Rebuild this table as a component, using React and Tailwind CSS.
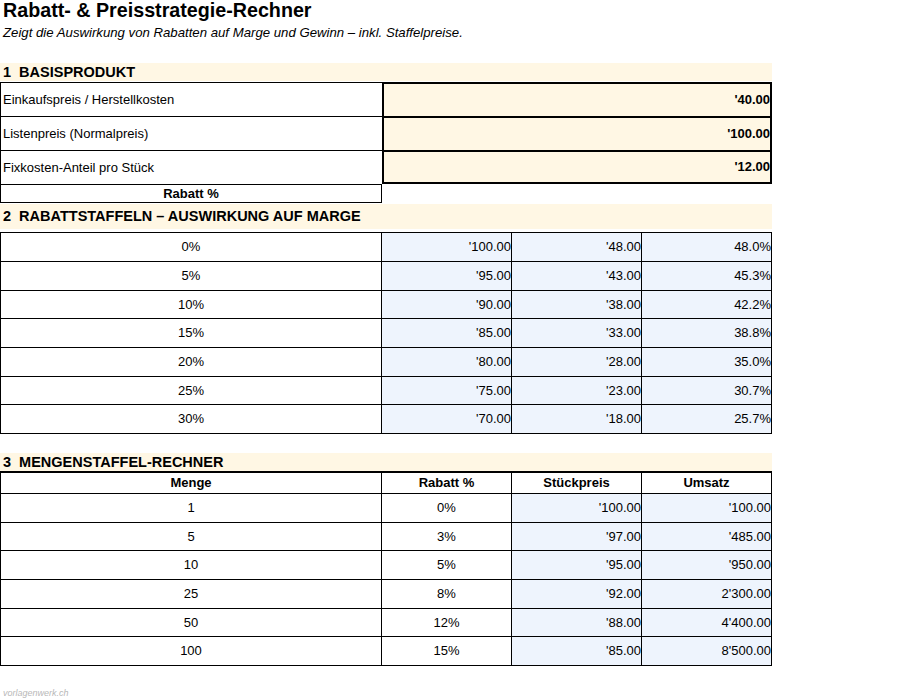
import React from "react";

const cream = "bg-[#fff7e4]";
const blue = "bg-[#eef4fd]";

const s2 = [
  ["0%", "'100.00", "'48.00", "48.0%"],
  ["5%", "'95.00", "'43.00", "45.3%"],
  ["10%", "'90.00", "'38.00", "42.2%"],
  ["15%", "'85.00", "'33.00", "38.8%"],
  ["20%", "'80.00", "'28.00", "35.0%"],
  ["25%", "'75.00", "'23.00", "30.7%"],
  ["30%", "'70.00", "'18.00", "25.7%"],
];
const s2h = ["h-[29px]", "h-[29px]", "h-[28px]", "h-[29px]", "h-[29px]", "h-[28px]", "h-[29px]"];

const s3 = [
  ["1", "0%", "'100.00", "'100.00"],
  ["5", "3%", "'97.00", "'485.00"],
  ["10", "5%", "'95.00", "'950.00"],
  ["25", "8%", "'92.00", "2'300.00"],
  ["50", "12%", "'88.00", "4'400.00"],
  ["100", "15%", "'85.00", "8'500.00"],
];
const s3h = ["h-[29px]", "h-[28px]", "h-[29px]", "h-[29px]", "h-[28px]", "h-[29px]"];

function SectionHeader({ children, h, inner }) {
  return (
    <div className={`${h} w-[772px] flex flex-col justify-start`}>
      <div className={`${inner} ${cream} flex items-center pl-[3px] text-[14.5px] font-bold whitespace-pre leading-none`}>
        {children}
      </div>
    </div>
  );
}

export default function App() {
  return (
    <div className="w-[900px] h-[700px] bg-white text-black font-['Liberation_Sans',Arial,sans-serif] flex flex-col relative overflow-hidden">
      <div className="h-[22px] text-[19.7px] font-bold leading-[20px] pl-[3px]">
        Rabatt- &amp; Preisstrategie-Rechner
      </div>
      <div className="h-[22px] text-[13.2px] italic leading-[22px] pl-[3px]">
        Zeigt die Auswirkung von Rabatten auf Marge und Gewinn – inkl. Staffelpreise.
      </div>
      <div className="h-[19px]" />
      <SectionHeader h="h-[19px]" inner="h-[18px]">1  BASISPRODUKT</SectionHeader>

      {/* Section 1 */}
      <div className="flex w-[772px]">
        <div className="w-[382px] flex flex-col">
          {["Einkaufspreis / Herstellkosten", "Listenpreis (Normalpreis)", "Fixkosten-Anteil pro Stück"].map((t) => (
            <div key={t} className="h-[34px] border-t border-l border-black flex items-center pl-[2px] text-[13px]">
              {t}
            </div>
          ))}
          <div className="h-[19px] border border-black flex items-center justify-center text-[13px] font-bold">
            Rabatt %
          </div>
        </div>
        <div className="w-[390px] flex flex-col">
          {["'40.00", "'100.00", "'12.00"].map((v, i) => (
            <div
              key={v}
              className={`h-[34px] ${cream} border-x-2 border-t-2 ${i === 2 ? "border-b-2" : ""} border-black flex items-center justify-end text-[13px] font-bold`}
            >
              {v}
            </div>
          ))}
        </div>
      </div>

      <SectionHeader h="h-[29px]" inner="h-[25px] mt-[1px]">2  RABATTSTAFFELN – AUSWIRKUNG AUF MARGE</SectionHeader>

      {/* Section 2 */}
      <div className="w-[772px] border-t border-l border-black flex flex-col text-[13px]">
        {s2.map((r, i) => (
          <div key={r[0]} className={`flex ${s2h[i]}`}>
            <div className="w-[381px] border-r border-b border-black flex items-center justify-center">{r[0]}</div>
            <div className={`w-[130px] ${blue} border-r border-b border-black flex items-center justify-end`}>{r[1]}</div>
            <div className={`w-[130px] ${blue} border-r border-b border-black flex items-center justify-end`}>{r[2]}</div>
            <div className={`w-[130px] ${blue} border-r border-b border-black flex items-center justify-end`}>{r[3]}</div>
          </div>
        ))}
      </div>

      <div className="h-[19px]" />
      <SectionHeader h="h-[18px]" inner="h-[18px]">3  MENGENSTAFFEL-RECHNER</SectionHeader>

      {/* Section 3 */}
      <div className="w-[772px] border-t-2 border-l border-black flex flex-col text-[13px]">
        <div className="flex h-[21px] font-bold">
          <div className="w-[381px] border-r border-b border-black flex items-center justify-center">Menge</div>
          <div className="w-[130px] border-r border-b border-black flex items-center justify-center">Rabatt %</div>
          <div className="w-[130px] border-r border-b border-black flex items-center justify-center">Stückpreis</div>
          <div className="w-[130px] border-r border-b border-black flex items-center justify-center">Umsatz</div>
        </div>
        {s3.map((r, i) => (
          <div key={r[0]} className={`flex ${s3h[i]}`}>
            <div className="w-[381px] border-r border-b border-black flex items-center justify-center">{r[0]}</div>
            <div className="w-[130px] border-r border-b border-black flex items-center justify-center">{r[1]}</div>
            <div className={`w-[130px] ${blue} border-r border-b border-black flex items-center justify-end`}>{r[2]}</div>
            <div className={`w-[130px] ${blue} border-r border-b border-black flex items-center justify-end`}>{r[3]}</div>
          </div>
        ))}
      </div>

      <div className="h-[21px]" />
      <div className="pl-[3px] text-[9px] italic text-[#b8b8b8] leading-[12px]">vorlagenwerk.ch</div>
    </div>
  );
}
